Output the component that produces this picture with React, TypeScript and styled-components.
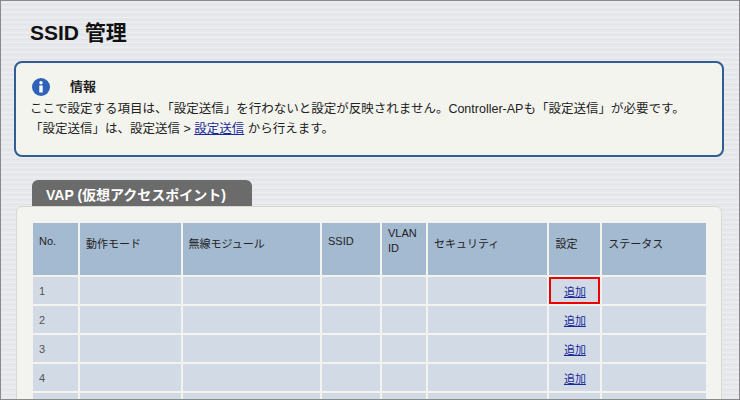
import React from 'react';
import styled, { createGlobalStyle } from 'styled-components';

const Global = createGlobalStyle`
  html, body { margin: 0; padding: 0; }
  body {
    font-family: "Liberation Sans", "Noto Sans CJK JP", sans-serif;
    width: 740px; height: 400px; overflow: hidden;
  }
`;

const Frame = styled.div`
  box-sizing: border-box;
  width: 740px;
  height: 400px;
  border: 1px solid #8a8a8a;
  overflow: hidden;
  background: repeating-linear-gradient(180deg, #e4e6ea 0px, #eef0f2 2px, #dfe1e5 3px, #e9ebee 5px);
  padding: 0 15px 0 13px;
`;

const Title = styled.h1`
  margin: 0;
  padding: 15px 0 0 16px;
  height: 44px;
  box-sizing: border-box;
  font-size: 21px;
  font-weight: bold;
  color: #111;
`;

const InfoBox = styled.div`
  margin-top: 16px;
  border: 2px solid #2f5d94;
  border-radius: 8px;
  background: #f4f4ef;
  padding: 14px 10px 14px 14px;
  height: 96px;
  box-sizing: border-box;
  font-size: 12.5px;
  color: #222;
  line-height: 20px;
  white-space: nowrap;
`;

const InfoHead = styled.div`
  display: flex;
  align-items: center;
  gap: 20px;
  font-weight: bold;
  font-size: 13px;
  margin-bottom: 2px;
  padding-left: 2px;
`;

const Link = styled.a`
  color: #1a2a9a;
  text-decoration: underline;
`;

const Tab = styled.div`
  margin: 23px 0 0 18px;
  width: 220px;
  height: 26px;
  box-sizing: border-box;
  background: #6b6b6b;
  border-radius: 6px 6px 0 0;
  color: #fff;
  font-weight: bold;
  font-size: 14px;
  padding: 4px 0 0 14px;
`;

const Panel = styled.div`
  margin: 0 2px 0 2px;
  background: #f3f3ef;
  border: 1px solid #d8d8d2;
  border-radius: 6px 6px 0 0;
  padding: 14px 13px 0 14px;
  height: 200px;
`;

const Table = styled.table`
  width: 677px;
  border-collapse: collapse;
  font-size: 11px;
  color: #222;
  th, td { border: 2px solid #f3f3ef; text-align: left; padding: 0 6px; }
  th { background: #a4bad1; height: 40px; font-weight: normal; vertical-align: top; padding-top: 12px; }
  td { background: #d2dae6; height: 27px; color: #555; }
`;

const AddCell = styled.td<{ $hl?: boolean }>`
  text-align: center !important;
  ${p => p.$hl && `outline: 2px solid #e00; outline-offset: -3px;`}
`;

const widths = [47, 103, 140, 60, 46, 122, 53, 106];
const heads = ['No.', '動作モード', '無線モジュール', 'SSID', 'VLAN\nID', 'セキュリティ', '設定', 'ステータス'];

export default function App() {
  return (
    <>
      <Global />
      <Frame>
        <Title>SSID 管理</Title>
        <InfoBox>
          <InfoHead>
            <svg width="18" height="18" viewBox="0 0 18 18">
              <circle cx="9" cy="9" r="9" fill="#2d62b8" />
              <circle cx="9" cy="4.8" r="1.7" fill="#fff" />
              <rect x="7.3" y="7.5" width="3.4" height="7" fill="#fff" />
            </svg>
            情報
          </InfoHead>
          <div>ここで設定する項目は、「設定送信」を行わないと設定が反映されません。Controller-APも「設定送信」が必要です。</div>
          <div>「設定送信」は、設定送信 &gt; <Link href="#">設定送信</Link> から行えます。</div>
        </InfoBox>
        <Tab>VAP (仮想アクセスポイント)</Tab>
        <Panel>
          <Table>
            <colgroup>{widths.map((w, i) => <col key={i} style={{ width: w }} />)}</colgroup>
            <thead>
              <tr>{heads.map(h => <th key={h} style={{ whiteSpace: 'pre-line', lineHeight: h.includes('\n') ? '15px' : undefined, paddingTop: h.includes('\n') ? 3 : undefined }}>{h}</th>)}</tr>
            </thead>
            <tbody>
              {[1, 2, 3, 4, 5].map(n => (
                <tr key={n}>
                  <td>{n}</td><td /><td /><td /><td /><td />
                  <AddCell $hl={n === 1}><Link href="#">追加</Link></AddCell>
                  <td />
                </tr>
              ))}
            </tbody>
          </Table>
        </Panel>
      </Frame>
    </>
  );
}
